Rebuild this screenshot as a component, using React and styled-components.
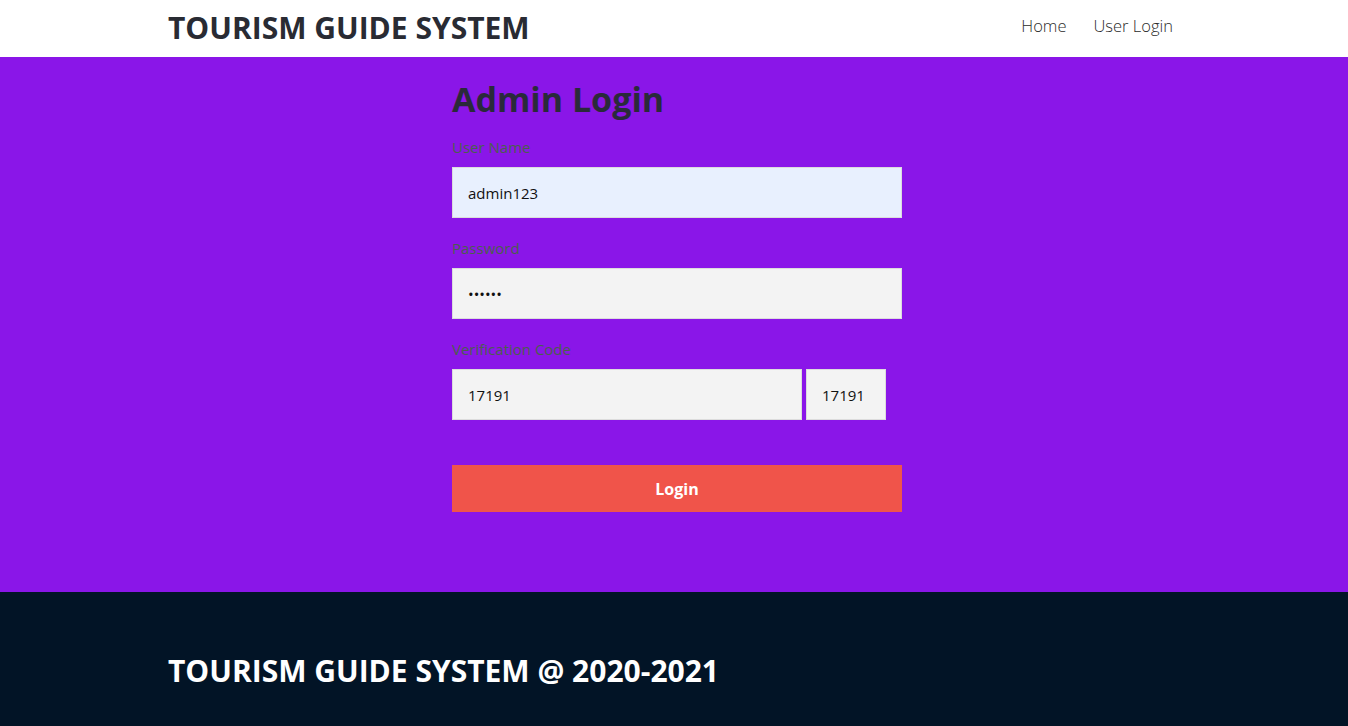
import React from "react";
import styled, { createGlobalStyle } from "styled-components";

const GlobalStyle = createGlobalStyle`
  * { box-sizing: border-box; }
  body {
    margin: 0;
    font-family: "Open Sans", "Noto Sans", "Liberation Sans", sans-serif;
    background: #ffffff;
  }
`;

const Container = styled.div`
  width: 1010px;
  margin: 0 auto;
`;

const Header = styled.header`
  height: 57px;
  background: #fff;
`;

const HeaderInner = styled(Container)`
  height: 100%;
  display: flex;
  align-items: center;
  justify-content: space-between;
`;

const Brand = styled.h1`
  margin: 0;
  font-size: 30px;
  font-weight: 700;
  color: #292b33;
  padding-bottom: 2px;
  margin-left: -1px;
`;

const Nav = styled.nav`
  display: flex;
  gap: 27px;
  padding-right: 6px;
  padding-bottom: 6px;

  a {
    font-size: 16.5px;
    font-weight: 300;
    color: #2a2a2a;
    text-decoration: none;
  }
`;

const Main = styled.main`
  background: #8a16e8;
  height: 535px;
  padding-top: 18px;
`;

const Form = styled.form`
  width: 450px;
  margin: 0 auto;
  padding-left: 6px;
  box-sizing: content-box;
`;

const Title = styled.h2`
  margin: 0 0 14px;
  font-size: 34px;
  line-height: 48px;
  font-weight: 700;
  color: #2a2a3a;
`;

const Label = styled.label`
  display: block;
  font-size: 15px;
  line-height: 20px;
  color: #4b5e4e;
  margin-bottom: 10px;
`;

const Field = styled.div`
  margin-bottom: 20px;
`;

const Input = styled.input`
  display: block;
  width: ${(p) => p.$w || "450px"};
  height: 51px;
  padding: 0 15px;
  border: 1px solid #dcdcdc;
  background: ${(p) => (p.$filled ? "#e8f0fe" : "#f3f3f3")};
  font-family: "Open Sans", "Noto Sans", sans-serif;
  font-size: 15px;
  color: #111;
  outline: none;
`;

const CodeRow = styled.div`
  display: flex;
  gap: 4px;
`;

const Button = styled.button`
  display: block;
  width: 450px;
  height: 47px;
  margin-top: 45px;
  border: none;
  background: #f0544a;
  color: #fff;
  font-family: "Open Sans", "Noto Sans", sans-serif;
  font-size: 16px;
  font-weight: 700;
  cursor: pointer;
`;

const Footer = styled.footer`
  background: #021426;
  height: 134px;
`;

const FooterInner = styled(Container)`
  height: 100%;
  display: flex;
  align-items: center;
  padding-top: 22px;
`;

const FooterText = styled.p`
  margin: 0 0 0 -1px;
  font-size: 30px;
  font-weight: 700;
  color: #fff;
`;

export default function App() {
  return (
    <>
      <GlobalStyle />
      <Header>
        <HeaderInner>
          <Brand>TOURISM GUIDE SYSTEM</Brand>
          <Nav>
            <a href="#">Home</a>
            <a href="#">User Login</a>
          </Nav>
        </HeaderInner>
      </Header>
      <Main>
        <Form onSubmit={(e) => e.preventDefault()}>
          <Title>Admin Login</Title>
          <Field>
            <Label>User Name</Label>
            <Input $filled defaultValue="admin123" />
          </Field>
          <Field>
            <Label>Password</Label>
            <Input type="password" defaultValue="123456" />
          </Field>
          <Field>
            <Label>Verification Code</Label>
            <CodeRow>
              <Input $w="350px" defaultValue="17191" />
              <Input $w="80px" defaultValue="17191" readOnly />
            </CodeRow>
          </Field>
          <Button type="submit">Login</Button>
        </Form>
      </Main>
      <Footer>
        <FooterInner>
          <FooterText>TOURISM GUIDE SYSTEM @ 2020-2021</FooterText>
        </FooterInner>
      </Footer>
    </>
  );
}
